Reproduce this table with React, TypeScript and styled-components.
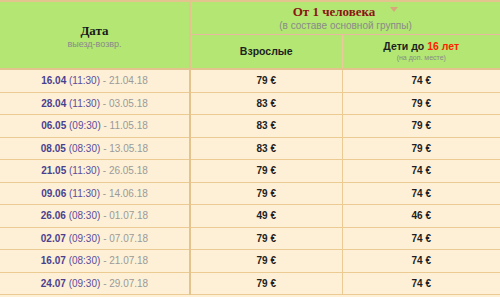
import styled, { createGlobalStyle } from "styled-components";

const GlobalStyle = createGlobalStyle`
  body {
    margin: 0;
    background: #fdf0d6;
    font-family: "Liberation Sans", Arial, sans-serif;
  }
`;

const Table = styled.table`
  width: 500px;
  border-collapse: collapse;
  table-layout: fixed;
  border-top: 2px solid #e3c48e;
`;

const HeadCell = styled.th<{ $line?: string }>`
  background: #b3e673;
  font-weight: normal;
  text-align: center;
  vertical-align: middle;
  padding: 0;
  border-left: 1px solid #ebc99b;
  border-bottom: 1px solid ${(p) => p.$line ?? "#ebc99b"};
`;

const DateHead = styled(HeadCell)`
  border-left: none;
  border-right: 2px solid #e3c48e;
  border-bottom: 2px solid #e3c48e;
  padding-top: 3px;
`;

const SerifTitle = styled.div<{ $color?: string }>`
  font-family: "Liberation Serif", "Times New Roman", serif;
  font-weight: bold;
  font-size: 13px;
  color: ${(p) => p.$color ?? "#1a1a1a"};
  line-height: 15px;
`;

const Caret = styled.span`
  display: inline-block;
  margin-left: 15px;
  vertical-align: middle;
  width: 0;
  height: 0;
  border-left: 4px solid transparent;
  border-right: 4px solid transparent;
  border-top: 5px solid #d9a77b;
  position: relative;
  top: -3px;
`;

const Sub = styled.div<{ $size: number }>`
  font-size: ${(p) => p.$size}px;
  color: #8a8a8a;
  line-height: ${(p) => p.$size + 3}px;
`;

const GroupHead = styled(HeadCell)`
  height: 31.5px;
`;

const SubHead = styled(HeadCell)`
  height: 33.5px;
  border-bottom: 2px solid #e3c48e;
`;

const ColTitle = styled.div`
  font-weight: bold;
  font-size: 10.5px;
  color: #1e1e1e;
  line-height: 13px;
`;

const Red = styled.span`
  color: #ff2200;
`;

const Cell = styled.td`
  height: 21.5px;
  padding: 0;
  text-align: center;
  font-size: 10px;
  border-bottom: 1px solid #ebcb91;
  border-left: 1px solid #ebcb91;
`;

const DateCell = styled(Cell)`
  border-left: none;
  border-right: 2px solid #e3c48e;
`;

const Start = styled.b`
  color: #4a3f8f;
`;

const Time = styled.span`
  color: #5a4ca0;
`;

const End = styled.span`
  color: #9a9a9a;
`;

const Price = styled.b`
  color: #1e1e1e;
`;

type Row = { start: string; time: string; end: string; adult: number; child: number };

const rows: Row[] = [
  { start: "16.04", time: "11:30", end: "21.04.18", adult: 79, child: 74 },
  { start: "28.04", time: "11:30", end: "03.05.18", adult: 83, child: 79 },
  { start: "06.05", time: "09:30", end: "11.05.18", adult: 83, child: 79 },
  { start: "08.05", time: "08:30", end: "13.05.18", adult: 83, child: 79 },
  { start: "21.05", time: "11:30", end: "26.05.18", adult: 79, child: 74 },
  { start: "09.06", time: "11:30", end: "14.06.18", adult: 79, child: 74 },
  { start: "26.06", time: "08:30", end: "01.07.18", adult: 49, child: 46 },
  { start: "02.07", time: "09:30", end: "07.07.18", adult: 79, child: 74 },
  { start: "16.07", time: "08:30", end: "21.07.18", adult: 79, child: 74 },
  { start: "24.07", time: "09:30", end: "29.07.18", adult: 79, child: 74 },
];

export default function App() {
  return (
    <>
      <GlobalStyle />
      <Table>
        <colgroup>
          <col style={{ width: 190 }} />
          <col style={{ width: 152 }} />
          <col />
        </colgroup>
        <thead>
          <tr>
            <DateHead rowSpan={2}>
              <SerifTitle>Дата</SerifTitle>
              <Sub $size={9}>выезд-возвр.</Sub>
            </DateHead>
            <GroupHead colSpan={2} $line="#e8b9a0">
              <SerifTitle $color="#8b1414">
                От 1 человека
                <Caret />
              </SerifTitle>
              <Sub $size={10}>(в составе основной группы)</Sub>
            </GroupHead>
          </tr>
          <tr>
            <SubHead>
              <ColTitle>Взрослые</ColTitle>
            </SubHead>
            <SubHead>
              <ColTitle>
                Дети до <Red>16 лет</Red>
              </ColTitle>
              <Sub $size={7}>(на доп. месте)</Sub>
            </SubHead>
          </tr>
        </thead>
        <tbody>
          {rows.map((r) => (
            <tr key={r.start}>
              <DateCell>
                <Start>{r.start}</Start> <Time>({r.time})</Time> <End>- {r.end}</End>
              </DateCell>
              <Cell>
                <Price>{r.adult} €</Price>
              </Cell>
              <Cell>
                <Price>{r.child} €</Price>
              </Cell>
            </tr>
          ))}
        </tbody>
      </Table>
    </>
  );
}
